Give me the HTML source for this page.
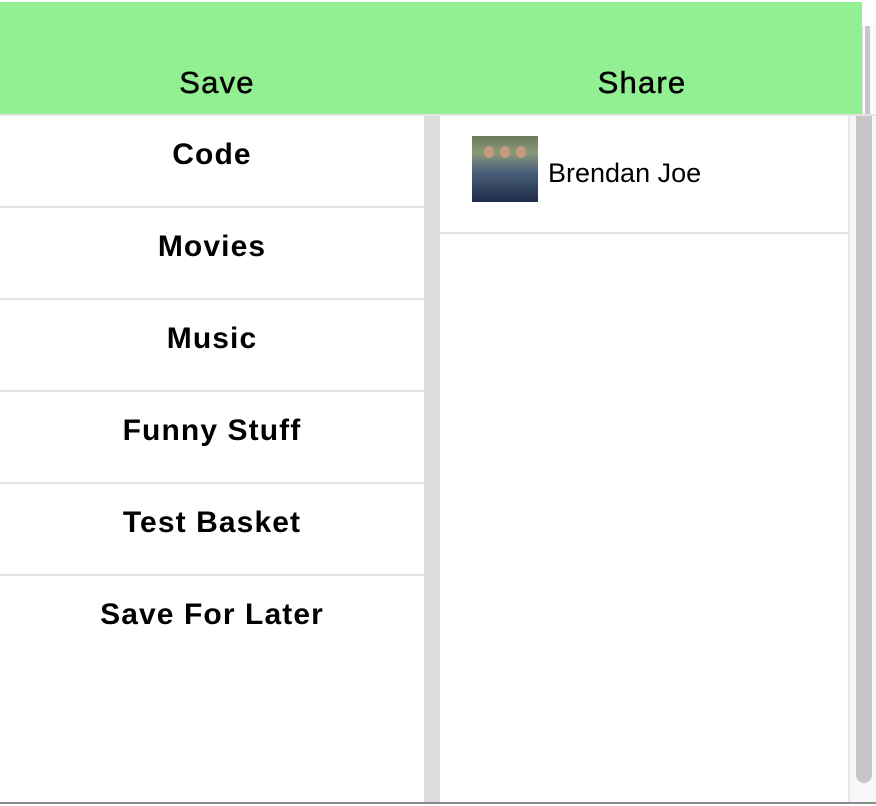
<!DOCTYPE html>
<html><head><style>
*{margin:0;padding:0;box-sizing:border-box}
body{width:876px;height:806px;background:#fff;position:relative;overflow:hidden;font-family:"Liberation Sans",sans-serif;color:#000}
.hdr{position:absolute;left:0;top:2px;width:862px;height:112px;background:#92ef92}
.hdr span{position:absolute;top:63px;font-size:31px;letter-spacing:1.2px;transform:translateX(-50%);-webkit-text-stroke:0.5px #000}
.hline{position:absolute;left:0;top:114px;width:876px;height:2px;background:#e2e2e2}
.oscroll{position:absolute;left:862px;top:26px;width:14px;height:90px;background:#fafafa;border-left:1px solid #e4e4e4}
.oscroll i{position:absolute;left:2px;top:0;width:5px;height:90px;background:#c6c6c6}
.left{position:absolute;left:0;top:116px;width:424px}
.row{height:92px;border-bottom:2px solid #e4e4e4;text-align:center;font-size:30px;font-weight:bold;letter-spacing:1.1px;padding-top:22px}
.row.last{border:none}
.div{position:absolute;left:424px;top:116px;width:16px;height:686px;background:#dcdcdc}
.right{position:absolute;left:440px;top:116px;width:408px;height:686px;background:#fff}
.rrow{height:118px;border-bottom:2px solid #e2e2e2;position:relative}
.pic{position:absolute;left:32px;top:20px;width:66px;height:66px;background:linear-gradient(180deg,#6b7a5a 0,#8a9a78 25%,#4a5f7a 55%,#1f2c4a 100%)}
.pic b{position:absolute;width:10px;height:12px;top:10px;background:#c99a80;border-radius:50%}
.name{position:absolute;left:108px;top:42px;font-size:27px}
.track{position:absolute;left:848px;top:116px;width:28px;height:686px;background:#f7f7f7;border-left:2px solid #e8e8e8}
.thumb{position:absolute;left:856px;top:116px;width:16px;height:667px;background:#c6c6c6;border-radius:0 0 8px 8px}
.bot{position:absolute;left:0;top:802px;width:876px;height:4px;background:#8a8a8a;border-bottom:2px solid #fff}
</style></head><body>
<div class="hdr"><span style="left:217px">Save</span><span style="left:642px">Share</span></div>
<div class="oscroll"><i></i></div>
<div class="hline"></div>
<div class="left">
<div class="row">Code</div>
<div class="row">Movies</div>
<div class="row">Music</div>
<div class="row">Funny Stuff</div>
<div class="row">Test Basket</div>
<div class="row last">Save For Later</div>
</div>
<div class="div"></div>
<div class="right"><div class="rrow"><div class="pic"><b style="left:12px"></b><b style="left:28px"></b><b style="left:44px"></b></div><div class="name">Brendan Joe</div></div></div>
<div class="track"></div>
<div class="thumb"></div>
<div class="bot"></div>
</body></html>
